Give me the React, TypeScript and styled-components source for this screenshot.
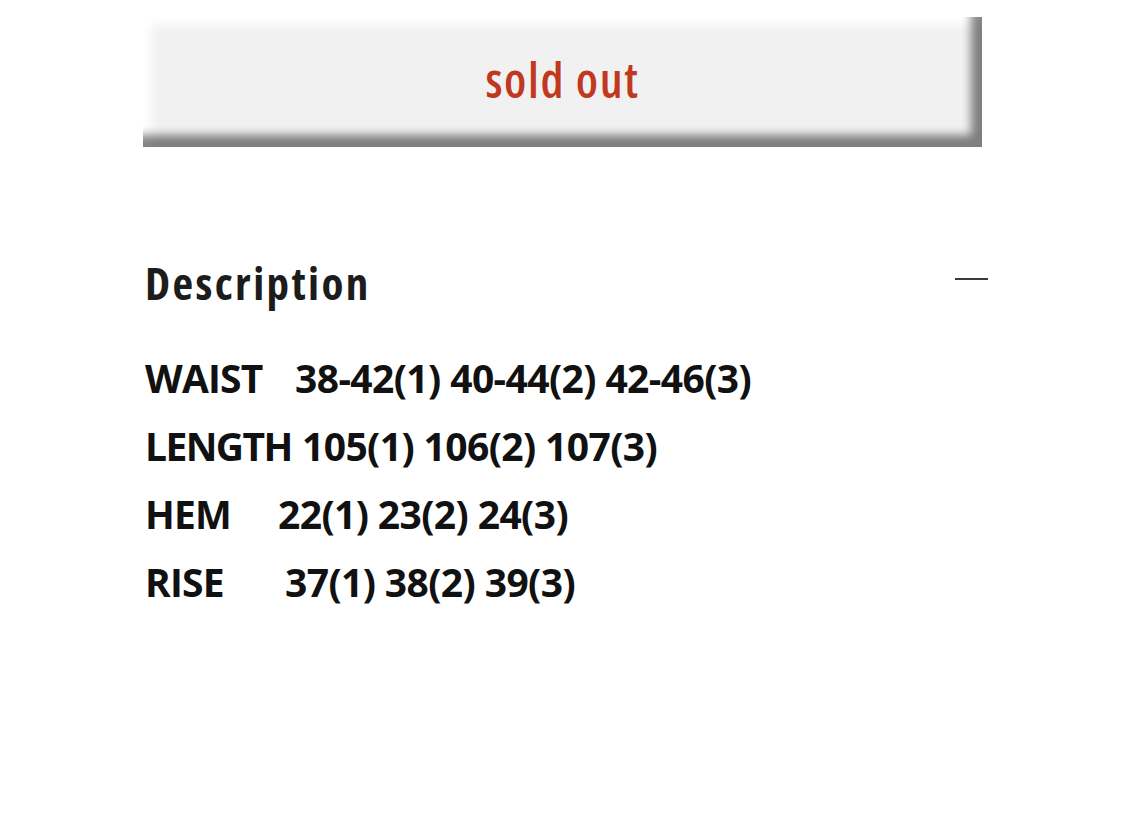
import React from "react";
import styled, { createGlobalStyle } from "styled-components";

const Global = createGlobalStyle`
  html, body { margin: 0; padding: 0; background: #fff; }
  body { font-family: "Open Sans", sans-serif; color: #1a1a1a; }
`;

const Page = styled.div`
  width: 1125px;
  height: 819px;
  box-sizing: border-box;
  padding: 17px 143px 0 143px;
  display: flex;
  flex-direction: column;
`;

const SoldOut = styled.div`
  height: 130px;
  width: 839px;
  box-sizing: border-box;
  display: flex;
  align-items: center;
  justify-content: center;
  background: #f1f1f1;
  box-shadow:
    inset -17px -18px 10px -6px rgba(0, 0, 0, 0.48),
    inset 12px 12px 12px -4px #ffffff;
  color: #c0391f;
  font-size: 48px;
  font-weight: 600;
  font-stretch: 80%;
  letter-spacing: 1.7px;
  padding-bottom: 6px;
`;

const Header = styled.div`
  margin-top: 109px;
  display: flex;
  align-items: center;
  justify-content: space-between;
`;

const Title = styled.h2`
  margin: 0;
  font-size: 45px;
  font-weight: 700;
  font-stretch: 80%;
  letter-spacing: 2.4px;
  color: #1c1c1c;
  line-height: 54px;
  padding-left: 2px;
`;

const Minus = styled.span`
  width: 33px;
  height: 2px;
  background: #3a3a3a;
  margin-right: -6px;
  margin-top: -8px;
`;

const List = styled.div`
  margin-top: 45px;
  display: flex;
  flex-direction: column;
  gap: 22px;
  padding-left: 2px;
`;

const Row = styled.div`
  display: flex;
  font-size: 39px;
  font-weight: 700;
  line-height: 46px;
  color: #111;
`;

const Label = styled.span<{ $w: number; $ls: number }>`
  width: ${(p) => p.$w}px;
  flex: none;
  letter-spacing: ${(p) => p.$ls}px;
`;

const Value = styled.span`
  letter-spacing: -0.6px;
`;

const rows = [
  { label: "WAIST", w: 150, ls: -0.8, value: "38-42(1) 40-44(2) 42-46(3)" },
  { label: "LENGTH", w: 157, ls: -1.6, value: "105(1) 106(2) 107(3)" },
  { label: "HEM", w: 133, ls: -0.8, value: "22(1) 23(2) 24(3)" },
  { label: "RISE", w: 140, ls: -0.8, value: "37(1) 38(2) 39(3)" },
];

export default function App() {
  return (
    <>
      <Global />
      <Page>
        <SoldOut>sold out</SoldOut>
        <Header>
          <Title>Description</Title>
          <Minus />
        </Header>
        <List>
          {rows.map((r) => (
            <Row key={r.label}>
              <Label $w={r.w} $ls={r.ls}>
                {r.label}
              </Label>
              <Value>{r.value}</Value>
            </Row>
          ))}
        </List>
      </Page>
    </>
  );
}
